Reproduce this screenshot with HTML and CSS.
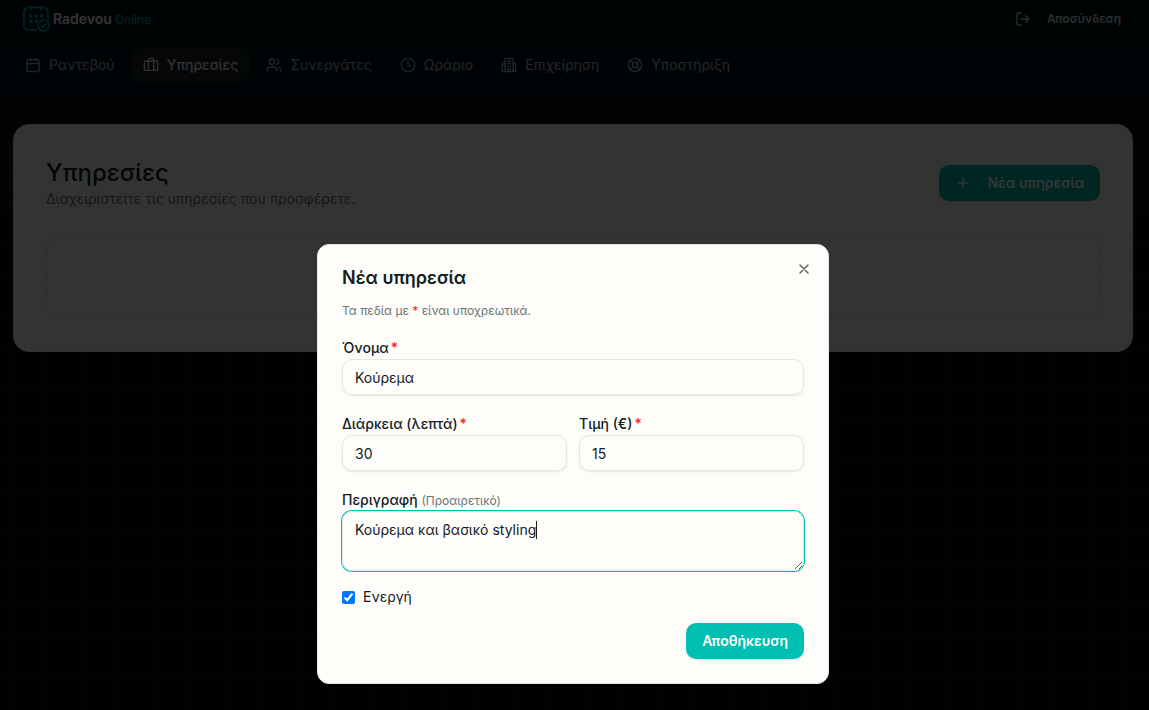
FILE: index.html
```html
<!DOCTYPE html>
<html lang="el">
<head>
  <meta charset="utf-8">
  <meta name="viewport" content="width=device-width, initial-scale=1">
  <title>Radevou Online – Υπηρεσίες</title>
  <link rel="stylesheet" href="styles.css">
</head>
<body>
  <div class="page">
    <header class="header">
      <div class="topbar">
        <a class="logo" href="#">
          <svg class="logo-mark" viewBox="0 0 28 28" fill="none" stroke="currentColor" stroke-width="1.6" stroke-linecap="round" stroke-linejoin="round">
            <path d="M13 25H5.500a4.500 4.500 0 0 1-4.500-4.500V7a4.500 4.500 0 0 1 4.500-4.500h15A4.500 4.500 0 0 1 25 7v7.500"/>
            <path d="M8 1v4M18 1v4"/>
            <circle cx="20.500" cy="20.500" r="5.500"/>
            <path d="m18 20.500 2 2 3-3.500"/>
            <path stroke="none" fill="currentColor" d="M6.500 9.500h3v3h-3zM11.700 9.500h3v3h-3zM17 9.500h3v3h-3zM6.500 14.700h3v3h-3zM11.700 14.700h3v3h-3z"/>
          </svg>
          <span class="logo-text"><b>Radevou</b><span>Online</span></span>
        </a>
        <button class="logout" type="button">
          <svg class="icon" viewBox="0 0 24 24"><path d="M9 21H5a2 2 0 0 1-2-2V5a2 2 0 0 1 2-2h4M16 17l5-5-5-5M21 12H9"/></svg>
          Αποσύνδεση
        </button>
      </div>
      <nav class="nav">
        <a class="nav-item" href="#"><svg class="icon" viewBox="0 0 24 24"><path d="M8 2v4M16 2v4M3 10h18"/><rect x="3" y="4" width="18" height="18" rx="2"/></svg>Ραντεβού</a>
        <a class="nav-item active" href="#" aria-current="page"><svg class="icon" viewBox="0 0 24 24"><path d="M16 20V4a2 2 0 0 0-2-2h-4a2 2 0 0 0-2 2v16"/><rect x="2" y="6" width="20" height="14" rx="2"/></svg>Υπηρεσίες</a>
        <a class="nav-item" href="#"><svg class="icon" viewBox="0 0 24 24"><path d="M16 21v-2a4 4 0 0 0-4-4H6a4 4 0 0 0-4 4v2M22 21v-2a4 4 0 0 0-3-3.870M16 3.130a4 4 0 0 1 0 7.750"/><circle cx="9" cy="7" r="4"/></svg>Συνεργάτες</a>
        <a class="nav-item" href="#"><svg class="icon" viewBox="0 0 24 24"><circle cx="12" cy="12" r="10"/><path d="M12 6v6l4 2"/></svg>Ωράριο</a>
        <a class="nav-item" href="#"><svg class="icon" viewBox="0 0 24 24"><path d="M6 22V4a2 2 0 0 1 2-2h8a2 2 0 0 1 2 2v18M2 22h20M6 10H4a2 2 0 0 0-2 2v8a2 2 0 0 0 2 2M18 9h2a2 2 0 0 1 2 2v9a2 2 0 0 1-2 2M10 6h4M10 10h4M10 14h4M10 22v-4h4v4"/></svg>Επιχείρηση</a>
        <a class="nav-item" href="#"><svg class="icon" viewBox="0 0 24 24"><circle cx="12" cy="12" r="10"/><circle cx="12" cy="12" r="4"/><path d="m4.930 4.930 4.240 4.240M14.830 9.170l4.240-4.240M14.830 14.830l4.240 4.240M9.170 14.830l-4.240 4.240"/></svg>Υποστήριξη</a>
      </nav>
    </header>

    <main class="main">
      <section class="card">
        <div class="card-head">
          <div>
            <h1 class="title">Υπηρεσίες</h1>
            <p class="subtitle">Διαχειριστείτε τις υπηρεσίες που προσφέρετε.</p>
          </div>
          <button class="button with-icon" type="button">
            <svg class="icon" viewBox="0 0 24 24"><path d="M5 12h14M12 5v14"/></svg>
            Νέα υπηρεσία
          </button>
        </div>
        <div class="empty"></div>
      </section>
    </main>
  </div>

  <div class="overlay">
    <div class="modal" role="dialog" aria-modal="true" aria-labelledby="modal-title">
      <button class="close" type="button" aria-label="Κλείσιμο">
        <svg class="icon" viewBox="0 0 24 24"><path d="M18 6 6 18M6 6l12 12"/></svg>
      </button>
      <h2 class="modal-title" id="modal-title">Νέα υπηρεσία</h2>
      <form class="form">
        <p class="note">Τα πεδία με <span class="required">*</span> είναι υποχρεωτικά.</p>
        <div class="field">
          <label class="label" for="name">Όνομα<span class="required mark">*</span></label>
          <input class="input" id="name" type="text" value="Κούρεμα" required>
        </div>
        <div class="row">
          <div class="field">
            <label class="label" for="duration">Διάρκεια (λεπτά)<span class="required mark">*</span></label>
            <input class="input" id="duration" type="text" inputmode="numeric" value="30" required>
          </div>
          <div class="field">
            <label class="label" for="price">Τιμή (€)<span class="required mark">*</span></label>
            <input class="input" id="price" type="text" inputmode="decimal" value="15" required>
          </div>
        </div>
        <div class="field">
          <label class="label" for="description">Περιγραφή <span class="optional">(Προαιρετικό)</span></label>
          <div class="editor">
            <textarea class="input textarea" id="description" spellcheck="false">Κούρεμα και βασικό styling</textarea>
            <span class="caret"></span>
          </div>
        </div>
        <label class="check"><input type="checkbox" checked>Ενεργή</label>
        <div class="actions"><button class="button" type="submit">Αποθήκευση</button></div>
      </form>
    </div>
  </div>
  <script src="main.js"></script>
</body>
</html>
```

FILE: styles.css
```css
* {
  box-sizing: border-box;
}

body {
  margin: 0;
  background: #00050a;
  color: #10201f;
  font: 14px/20px Inter, "Noto Sans", sans-serif;
}

h1,
h2,
p {
  margin: 0;
}

a {
  color: inherit;
  text-decoration: none;
}

button,
input,
textarea {
  font: inherit;
  color: inherit;
}

.icon {
  width: 16px;
  height: 16px;
  flex: none;
  fill: none;
  stroke: currentColor;
  stroke-width: 2;
  stroke-linecap: round;
  stroke-linejoin: round;
}

.page {
  min-height: 100vh;
  padding-right: 3px;
  background:
    linear-gradient(90deg, rgba(255, 255, 255, 0.04) 1px, transparent 1px) 9px 27px / 36px 36px,
    linear-gradient(rgba(255, 255, 255, 0.04) 1px, transparent 1px) 9px 27px / 36px 36px,
    linear-gradient(#000f14, #00070d 300px, #000509);
}

.header {
  margin-right: -3px;
  padding: 0 16px 8px 13px;
  border-bottom: 1px solid #0d1a20;
  background: linear-gradient(#000f14, #00101c);
}

.topbar {
  display: flex;
  align-items: center;
  justify-content: space-between;
  height: 38px;
  margin-bottom: 9px;
  padding: 0 12px 0 10px;
}

.logo {
  display: flex;
  align-items: center;
  gap: 2px;
  color: #00bfb3;
}

.logo-mark {
  width: 28px;
  height: 28px;
}

.logo-text {
  display: flex;
  align-items: baseline;
  gap: 3px;
  font-size: 12px;
}

.logo-text b {
  color: #fff;
  font-size: 14px;
  font-weight: 600;
}

.logout {
  display: flex;
  align-items: center;
  gap: 16px;
  padding: 0;
  border: 0;
  background: none;
  color: #d8d8d8;
  font-size: 12px;
  font-weight: 600;
}

.nav {
  display: flex;
  gap: 4px;
}

.nav-item {
  display: flex;
  align-items: center;
  gap: 8px;
  height: 36px;
  padding: 0 12px;
  border-radius: 12px;
  color: #b4b9bd;
}

.nav-item.active {
  background: #1c2326;
  color: #f0f0f0;
  font-weight: 500;
}

.main {
  padding: 32px 13px;
}

.card {
  padding: 32px;
  border: 1px solid #f4f6f5;
  border-radius: 16px;
  background: #fff;
}

.card-head {
  display: flex;
  align-items: center;
  justify-content: space-between;
}

.title {
  font-size: 24px;
  line-height: 32px;
  font-weight: 500;
}

.subtitle {
  color: #687776;
}

.empty {
  height: 86px;
  margin-top: 24px;
  border: 1px dashed #d2dadc;
  border-radius: 14px;
}

.button {
  display: inline-flex;
  align-items: center;
  height: 36px;
  padding: 0 16px;
  border: 0;
  border-radius: 10px;
  background: #00bfb3;
  box-shadow: 0 1px 2px rgba(0, 0, 0, 0.1);
  color: #fdfcf9;
  font-weight: 600;
}

.with-icon {
  gap: 16px;
}

.overlay {
  position: fixed;
  inset: 0;
  padding: 244px 19px 16px 16px;
  overflow: auto;
  background: rgba(0, 0, 0, 0.8);
}

.modal {
  position: relative;
  max-width: 512px;
  margin: 0 auto;
  padding: 24px;
  border: 1px solid #dfe9ec;
  border-radius: 12px;
  background: #fefdfa;
}

.close {
  position: absolute;
  top: 16px;
  right: 16px;
  display: flex;
  padding: 0;
  border: 0;
  background: none;
  opacity: 0.7;
}

.modal-title {
  font-size: 18px;
  line-height: 18px;
  font-weight: 600;
}

.form {
  display: grid;
  gap: 16px;
  margin-top: 16px;
}

.note {
  color: #687776;
  font-size: 12px;
  line-height: 16px;
}

.required {
  color: #fb2020;
}

.mark {
  margin-left: 2px;
}

.row {
  display: grid;
  grid-template-columns: 1fr 1fr;
  gap: 12px;
}

.field {
  display: flex;
  flex-direction: column;
}

.label {
  padding-top: 2px;
  line-height: 22px;
  font-weight: 500;
}

.optional {
  color: #687776;
  font-size: 12px;
  line-height: 16px;
  font-weight: 400;
}

.input {
  width: 100%;
  height: 36px;
  padding: 0 12px;
  border: 1px solid #dfe9ec;
  border-radius: 10px;
  outline: none;
  background: transparent;
  box-shadow: 0 1px 2px rgba(0, 0, 0, 0.1);
}

.editor {
  position: relative;
}

.textarea {
  display: block;
  height: 60px;
  padding: 8px 12px;
  resize: vertical;
  caret-color: transparent;
}

.textarea:focus {
  box-shadow: 0 0 0 1px #00bfb3;
}

.caret {
  position: absolute;
  top: 10px;
  left: 194px;
  width: 1px;
  height: 18px;
  background: #10201f;
}

.check {
  display: flex;
  align-items: center;
  gap: 8px;
}

.check input {
  width: 13px;
  height: 13px;
  margin: 0;
}

.actions {
  display: flex;
  justify-content: flex-end;
}
```

FILE: main.js
```js
const description = document.getElementById("description");
description.focus();
description.setSelectionRange(description.value.length, description.value.length);
```
